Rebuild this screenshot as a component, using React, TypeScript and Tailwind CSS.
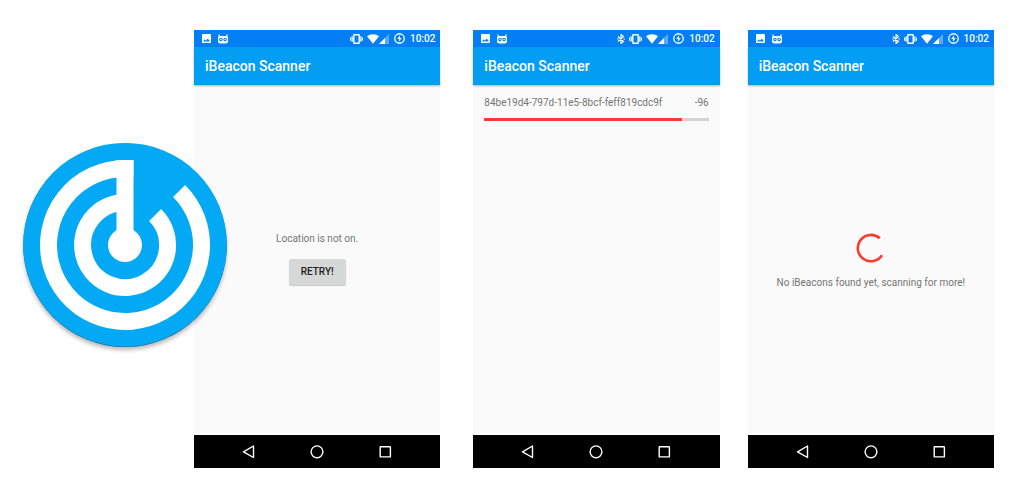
import type { ReactNode } from "react";

function Logo() {
  return (
    <svg
      viewBox="0 0 212 216"
      className="relative z-10 -mr-[37px] mb-1.5 w-[212px] shrink-0 self-center"
      role="img"
      aria-label="iBeacon Scanner logo"
    >
      <defs>
        <filter id="logo-shadow" x="-10%" y="-10%" width="120%" height="120%">
          <feGaussianBlur stdDeviation="2" />
        </filter>
      </defs>
      <circle cx="106" cy="110.500" r="101.500" fill="#000" opacity="0.28" filter="url(#logo-shadow)" />
      <circle cx="106" cy="107.300" r="101.800" fill="#1d6d98" />
      <circle cx="106" cy="106.700" r="101.800" fill="#03a9f4" />
      <g fill="none" stroke="#fff" strokeWidth="17">
        <path d="M160.100 52.900A76.500 76.500 0 1 1 106 30.500H114.500" />
        <path d="M136.100 76.900A42.500 42.500 0 1 1 106 64.500" />
      </g>
      <path d="M97.500 22h17v72h-17z" fill="#fff" />
      <circle cx="106" cy="107" r="17" fill="#fff" />
    </svg>
  );
}

function PictureIcon() {
  return (
    <svg viewBox="0 0 18 18" className="size-[9px]" fill="#fff" aria-hidden="true">
      <path d="M18 16V2a2 2 0 0 0-2-2H2a2 2 0 0 0-2 2v14c0 1.100.9 2 2 2h14a2 2 0 0 0 2-2zM5.500 10.500 8 13.500l3.500-4.500 4.500 6H2z" />
    </svg>
  );
}

function RobotIcon() {
  return (
    <svg viewBox="0 0 20 20" className="size-[10px]" aria-hidden="true">
      <path
        fill="#fff"
        fillRule="evenodd"
        d="M1.500 0 4.500 4h11l3-4 1 .8L18 5h2v9a5 5 0 0 1-5 5H5a5 5 0 0 1-5-5V5h2L.5.8zM5.800 7.600a3.600 3.600 0 1 0 0 7.200 3.600 3.600 0 0 0 0-7.200zm8.400 0a3.600 3.600 0 1 0 0 7.200 3.600 3.600 0 0 0 0-7.200z"
      />
      <circle cx="5.800" cy="11.200" r="1.500" fill="#fff" />
      <circle cx="14.200" cy="11.200" r="1.500" fill="#fff" />
    </svg>
  );
}

function BluetoothIcon() {
  return (
    <svg viewBox="4 2 16 20" className="mr-1 h-[10px] w-2" aria-hidden="true">
      <path d="M6 7l11 10-5 4V3l5 4L6 17" fill="none" stroke="#fff" strokeWidth="2.200" />
      <circle cx="6" cy="12" r="1.500" fill="#fff" />
      <circle cx="18.300" cy="12" r="1.500" fill="#fff" />
    </svg>
  );
}

function VibrateIcon() {
  return (
    <svg viewBox="0 0 24 18" className="mr-1 h-[10px] w-[13px]" aria-hidden="true">
      <rect x="7" y="1.200" width="10" height="15.600" rx="1" fill="none" stroke="#fff" strokeWidth="2.600" />
      <path d="M4 4v10M1 6v6M20 4v10M23 6v6" stroke="#fff" strokeWidth="2.200" />
    </svg>
  );
}

function WifiIcon() {
  return (
    <svg viewBox="0 0 24 19" className="h-[10px] w-3" aria-hidden="true">
      <path d="M12 19 0 4C3 1.500 7 0 12 0s9 1.500 12 4z" fill="#fff" />
    </svg>
  );
}

function SignalIcon() {
  return (
    <svg viewBox="0 0 20 20" className="h-[10px] w-[10px]" fill="#fff" aria-hidden="true">
      <path d="M20 0v20H0z" opacity="0.35" />
      <path d="M12 8v12H0z" />
    </svg>
  );
}

function BatteryIcon() {
  return (
    <svg viewBox="0 0 22 22" className="ml-[5px] size-[11px]" aria-hidden="true">
      <circle cx="11" cy="11" r="9.500" fill="none" stroke="#fff" strokeWidth="2.600" />
      <path d="M12.500 4 6.500 12h4l-1 6 6-8h-4z" fill="#fff" />
    </svg>
  );
}

function StatusBar({ bluetooth }: { bluetooth: boolean }) {
  return (
    <div className="flex h-[17px] items-center bg-[#037ef3] pr-[5px] pl-2 text-white">
      <div className="flex items-center gap-[7px]">
        <PictureIcon />
        <RobotIcon />
      </div>
      <div className="ml-auto flex items-center">
        {bluetooth && <BluetoothIcon />}
        <VibrateIcon />
        <WifiIcon />
        <SignalIcon />
        <BatteryIcon />
        <time className="ml-[5px] text-[10px] leading-4 font-medium">10:02</time>
      </div>
    </div>
  );
}

function NavBar() {
  const button = "flex size-6 items-center justify-center";
  return (
    <nav className="flex h-[33px] items-center justify-center gap-11 bg-black">
      <button type="button" aria-label="Back" className={button}>
        <svg viewBox="0 0 14 14" className="size-[14px]" aria-hidden="true">
          <path d="M11.500 1v11.500L1.500 6.800z" fill="none" stroke="#fff" strokeWidth="1.400" strokeLinejoin="round" />
        </svg>
      </button>
      <button type="button" aria-label="Home" className={button}>
        <svg viewBox="0 0 14 14" className="size-[14px]" aria-hidden="true">
          <circle cx="7" cy="6.800" r="5.900" fill="none" stroke="#fff" strokeWidth="1.400" />
        </svg>
      </button>
      <button type="button" aria-label="Recent apps" className={button}>
        <svg viewBox="0 0 14 14" className="size-[14px]" aria-hidden="true">
          <rect x="2.200" y="1.700" width="10.200" height="10.200" rx="0.500" fill="none" stroke="#fff" strokeWidth="1.400" />
        </svg>
      </button>
    </nav>
  );
}

function Phone({ bluetooth = false, children }: { bluetooth?: boolean; children: ReactNode }) {
  return (
    <section className="flex min-w-0 flex-1 flex-col bg-[#fafafa]">
      <StatusBar bluetooth={bluetooth} />
      <header className="flex h-[38px] items-center bg-[#039df3] px-[11px] shadow-[0_1px_2px_rgba(0,0,0,0.3)]">
        <h1 className="text-[14px] leading-5 font-medium text-white">iBeacon Scanner</h1>
      </header>
      <div className="flex flex-1 flex-col border-b-2 border-white">{children}</div>
      <NavBar />
    </section>
  );
}

export default function App() {
  return (
    <main className="flex min-h-screen bg-white pt-[30px] pr-[30px] pb-8 pl-[19px] font-['Roboto',sans-serif] text-[10px] leading-4 text-[#757575]">
      <Logo />
      <div className="flex min-w-0 flex-1">
        <Phone>
          <div className="flex flex-1 flex-col items-center justify-center gap-3 pb-0.5">
            <p>Location is not on.</p>
            <button
              type="button"
              className="h-[26px] rounded-xs bg-[#d6d7d7] px-3 font-medium text-[#212121] shadow-[0_1px_1px_rgba(0,0,0,0.2)]"
            >
              RETRY!
            </button>
          </div>
        </Phone>
        <div className="w-[33px] shrink-0" />
        <Phone bluetooth>
          <div className="px-[11px] pt-[10px]">
            <div className="flex justify-between">
              <span>84be19d4-797d-11e5-8bcf-feff819cdc9f</span>
              <span>-96</span>
            </div>
            <div className="mt-[7px] h-[3px] bg-[#d3d3d3]">
              <div className="h-full w-[88%] bg-[#fb3b2f]" />
            </div>
          </div>
        </Phone>
        <div className="w-7 shrink-0" />
        <Phone bluetooth>
          <div className="flex flex-1 flex-col items-center justify-center gap-3 pt-1.5">
            <svg viewBox="0 0 30 30" className="size-[30px]" role="img" aria-label="Scanning">
              <path d="M23.700 5.200A13.200 13.200 0 1 0 26 22.300" fill="none" stroke="#fb3b2f" strokeWidth="2.600" />
            </svg>
            <p>No iBeacons found yet, scanning for more!</p>
          </div>
        </Phone>
      </div>
    </main>
  );
}
